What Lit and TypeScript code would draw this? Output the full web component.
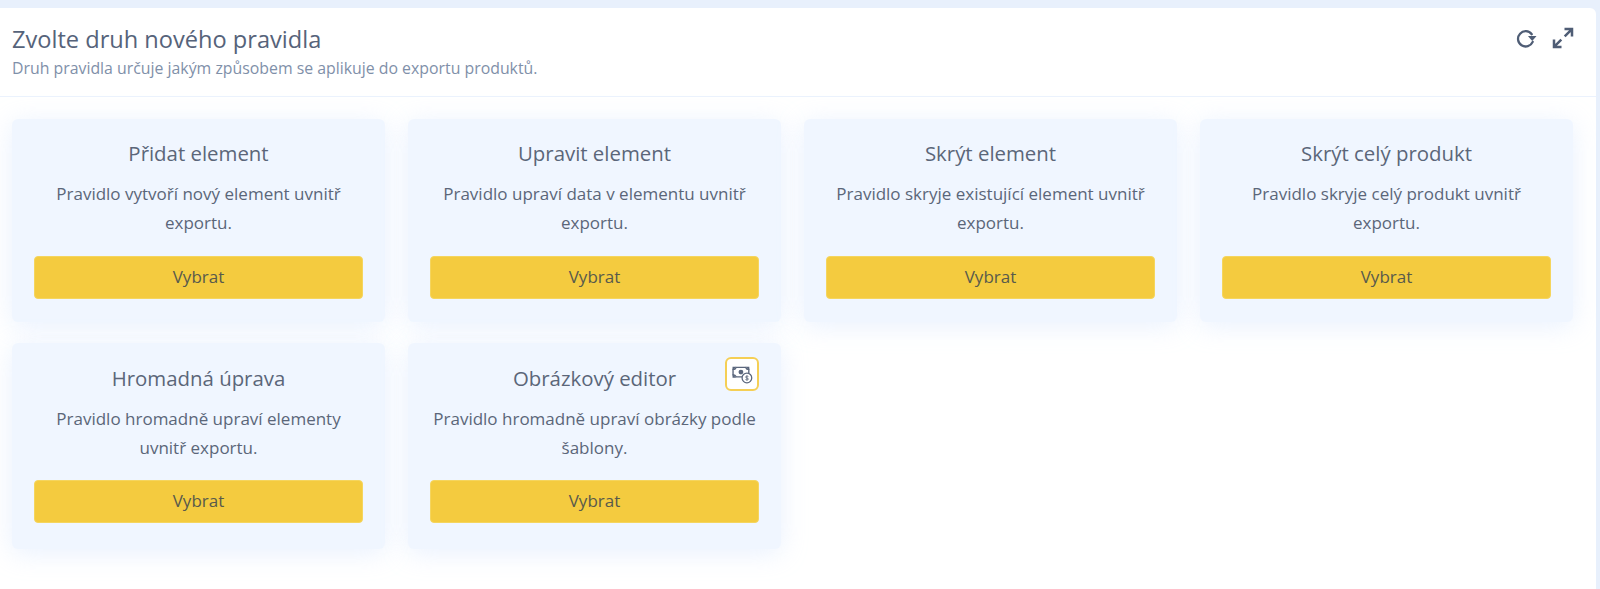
import { LitElement, html, css, svg } from "lit";
import { customElement } from "lit/decorators.js";

const cards = [
  ["Přidat element", "Pravidlo vytvoří nový element uvnitř exportu."],
  ["Upravit element", "Pravidlo upraví data v elementu uvnitř exportu."],
  ["Skrýt element", "Pravidlo skryje existující element uvnitř exportu."],
  ["Skrýt celý produkt", "Pravidlo skryje celý produkt uvnitř exportu."],
  ["Hromadná úprava", "Pravidlo hromadně upraví elementy uvnitř exportu."],
  ["Obrázkový editor", "Pravidlo hromadně upraví obrázky podle šablony."],
];

const moneyIcon = svg`<svg viewBox="0 0 20 18" width="21" height="19" fill="none">
  <path d="M1 4.200c1.500 0 2.400-.6 3-2h9c.6 1.400 1.500 2 3 2v5c-1.500 0-2.400.6-3 2H4c-.6-1.400-1.500-2-3-2z" stroke="#5a667c" stroke-width="1.300"/>
  <path d="M.5 1.500h3.500L.5 5zM16.500 1.500H13l3.500 3.500zM.5 12H4L.5 8.500z" fill="#5a667c"/>
  <circle cx="8.500" cy="6.700" r="2.300" fill="#5a667c"/>
  <circle cx="14.200" cy="12.300" r="4.600" fill="#fff" stroke="#5a667c" stroke-width="1.200"/>
  <path d="M15.600 10.900c-.4-.5-2.600-.7-2.700.5-.1 1.300 2.900.7 2.800 2-.1 1.100-2.400 1-2.900.4M14.200 9.900v4.800" stroke="#5a667c" stroke-width=".8"/>
</svg>`;

@customElement("app-root")
export class AppRoot extends LitElement {
  static styles = css`
    :host {
      display: block;
      height: 589px;
      background: #e8f0fc;
      padding-top: 8px;
      box-sizing: border-box;
      overflow: hidden;
      font-family: "Open Sans", sans-serif;
    }
    .panel {
      width: 1596px;
      height: 581px;
      background: #fff;
      border-top-right-radius: 6px;
    }
    .head {
      height: 89px;
      box-sizing: border-box;
      border-bottom: 1px solid #ebf2fd;
      padding: 16px 22px 0 12px;
      display: flex;
      justify-content: space-between;
      align-items: flex-start;
    }
    h1 {
      margin: 0;
      font-size: 23.6px;
      line-height: 30px;
      font-weight: 400;
      color: #56637a;
    }
    .sub {
      font-size: 15.85px;
      line-height: 20px;
      margin-top: 4px;
      color: #7f90a9;
    }
    .tools {
      display: flex;
      gap: 15px;
      padding-top: 3px;
      align-items: center;
    }
    .tools svg {
      display: block;
    }
    .grid {
      display: grid;
      grid-template-columns: repeat(4, 373px);
      gap: 21px 23px;
      padding: 22px 0 0 12px;
    }
    .card {
      position: relative;
      box-sizing: border-box;
      height: 203px;
      padding: 21px 22px 0;
      background: #f0f6ff;
      border-radius: 6px;
      box-shadow: 0 4px 26px rgba(226, 236, 254, 0.75);
      text-align: center;
    }
    .card.low {
      height: 206px;
      padding-top: 22px;
    }
    h2 {
      margin: 0;
      font-size: 20.4px;
      line-height: 27px;
      font-weight: 400;
      color: #5b6679;
    }
    p {
      margin: 12px 0 0;
      font-size: 17px;
      line-height: 29px;
      height: 58px;
      color: #5b6679;
    }
    button {
      display: block;
      margin-top: 19px;
      height: 43px;
      width: 100%;
      border: 1px solid #f5d55e;
      border-radius: 4px;
      background: #f4cb3f;
      color: #585a4c;
      font: 400 17px "Open Sans", sans-serif;
      padding: 0 0 3px;
    }
    .card.low button {
      margin-top: 18px;
    }
    .badge {
      position: absolute;
      top: 14px;
      right: 22px;
      width: 34px;
      height: 34px;
      box-sizing: border-box;
      border: 2px solid #f5cf55;
      border-radius: 6px;
      background: #fff;
      display: flex;
      align-items: center;
      justify-content: center;
    }
  `;

  render() {
    return html`<div class="panel">
      <div class="head">
        <div>
          <h1>Zvolte druh nového pravidla</h1>
          <div class="sub">Druh pravidla určuje jakým způsobem se aplikuje do exportu produktů.</div>
        </div>
        <div class="tools">
          <svg viewBox="0 0 22 22" width="21" height="21" fill="none">
            <path d="M16.500 6.500A8 8 0 1 0 17.500 14.500" stroke="#4f5d75" stroke-width="2.400" stroke-linecap="round"/>
            <path d="M12.500 8.500h9l-4.500 5z" fill="#4f5d75"/>
          </svg>
          <svg viewBox="0 0 22 22" width="22" height="22" fill="none" stroke="#4f5d75" stroke-width="2.500">
            <path d="M12.500 2h7.500v7.500M19.700 2.300l-7 7M9.500 20H2v-7.500M2.300 19.700l7-7"/>
          </svg>
        </div>
      </div>
      <div class="grid">
        ${cards.map(
          ([t, d], i) => html`<div class="card ${i > 3 ? "low" : ""}">
            <h2>${t}</h2>
            <p>${d}</p>
            <button>Vybrat</button>
            ${i === 5 ? html`<div class="badge">${moneyIcon}</div>` : ""}
          </div>`
        )}
      </div>
    </div>`;
  }
}
